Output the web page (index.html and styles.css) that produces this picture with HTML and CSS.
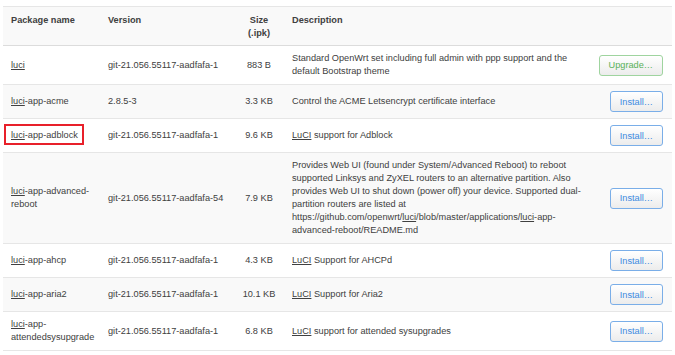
FILE: index.html
```html
<!DOCTYPE html>
<html lang="en">
<head>
  <meta charset="UTF-8" />
  <title>Software</title>
  <link rel="stylesheet" href="styles.css">
</head>
<body>
  <div class="page">
    <table class="pkg-table">
      <colgroup>
        <col class="c-name" />
        <col class="c-version" />
        <col class="c-size" />
        <col class="c-desc" />
        <col class="c-action" />
      </colgroup>
      <thead>
        <tr>
          <th>Package name</th>
          <th>Version</th>
          <th class="size">Size<br />(.ipk)</th>
          <th>Description</th>
          <th></th>
        </tr>
      </thead>
      <tbody>
        <tr>
          <td><a href="#">luci</a></td>
          <td>git-21.056.55117-aadfafa-1</td>
          <td class="size">883 B</td>
          <td>Standard OpenWrt set including full admin with ppp support and the default Bootstrap theme</td>
          <td class="action"><button class="btn btn-upgrade">Upgrade…</button></td>
        </tr>
        <tr>
          <td><a href="#">luci</a>-app-acme</td>
          <td>2.8.5-3</td>
          <td class="size">3.3 KB</td>
          <td>Control the ACME Letsencrypt certificate interface</td>
          <td class="action"><button class="btn">Install…</button></td>
        </tr>
        <tr>
          <td><span class="marked"><a href="#">luci</a>-app-adblock</span></td>
          <td>git-21.056.55117-aadfafa-1</td>
          <td class="size">9.6 KB</td>
          <td><a href="#">LuCI</a> support for Adblock</td>
          <td class="action"><button class="btn">Install…</button></td>
        </tr>
        <tr>
          <td><a href="#">luci</a>-app-advanced-reboot</td>
          <td>git-21.056.55117-aadfafa-54</td>
          <td class="size">7.9 KB</td>
          <td>Provides Web UI (found under System/Advanced Reboot) to reboot supported Linksys and ZyXEL routers to an alternative partition. Also provides Web UI to shut down (power off) your device. Supported dual-partition routers are listed at https://github.com/openwrt/<a href="#">luci</a>/blob/master/applications/<a href="#">luci</a>-app-advanced-reboot/README.md</td>
          <td class="action"><button class="btn">Install…</button></td>
        </tr>
        <tr>
          <td><a href="#">luci</a>-app-ahcp</td>
          <td>git-21.056.55117-aadfafa-1</td>
          <td class="size">4.3 KB</td>
          <td><a href="#">LuCI</a> Support for AHCPd</td>
          <td class="action"><button class="btn">Install…</button></td>
        </tr>
        <tr>
          <td><a href="#">luci</a>-app-aria2</td>
          <td>git-21.056.55117-aadfafa-1</td>
          <td class="size">10.1 KB</td>
          <td><a href="#">LuCI</a> Support for Aria2</td>
          <td class="action"><button class="btn">Install…</button></td>
        </tr>
        <tr>
          <td><a href="#">luci</a>-app-attendedsysupgrade</td>
          <td>git-21.056.55117-aadfafa-1</td>
          <td class="size">6.8 KB</td>
          <td><a href="#">LuCI</a> support for attended sysupgrades</td>
          <td class="action"><button class="btn">Install…</button></td>
        </tr>
      </tbody>
    </table>
  </div>
</body>
</html>
```

FILE: styles.css
```css
body {
  margin: 0;
  background: #fff;
  font-family: 'Liberation Sans', Arial, sans-serif;
  font-size: 9.2px;
  color: #404040;
}
.page {
  padding: 6px 3px 0 3px;
}
.pkg-table {
  width: 669px;
  table-layout: fixed;
  border-collapse: collapse;
  border-top: 1px solid #e6e6e6;
}
.c-name { width: 97px; }
.c-version { width: 134px; }
.c-size { width: 50px; }
.c-desc { width: 308px; }
.c-action { width: 80px; }
.pkg-table th,
.pkg-table td {
  padding: 6px 8px;
  line-height: 13px;
  text-align: left;
  border-bottom: 1px solid #e6e6e6;
}
.pkg-table th {
  vertical-align: top;
  font-weight: bold;
  padding-top: 7px;
  padding-bottom: 5px;
  background: #f9f9f9;
  border-bottom: 1px solid #dcdcdc;
}
.pkg-table td {
  vertical-align: middle;
}
.pkg-table tbody tr:nth-child(even) td {
  background: #f9f9f9;
}
.pkg-table .size {
  text-align: center;
  padding-left: 4px;
  padding-right: 4px;
}
.pkg-table td.action {
  text-align: right;
  white-space: nowrap;
  padding-left: 0;
  padding-right: 9px;
}
a {
  color: #404040;
  text-decoration: underline;
}
.marked {
  position: relative;
}
.marked::after {
  content: "";
  position: absolute;
  left: -7px;
  top: -6px;
  right: -6px;
  bottom: -5px;
  border: 2px solid #e8202a;
}
.btn {
  font-family: 'Liberation Sans', Arial, sans-serif;
  font-size: 9.2px;
  height: 21px;
  padding: 0 9px;
  color: #3d8ae0;
  background: linear-gradient(#ffffff, #ececec);
  border: 1px solid #7aaee8;
  border-radius: 3px;
  box-shadow: inset 0 1px 0 #fff;
  cursor: pointer;
}
.btn-upgrade {
  color: #58b158;
  border-color: #9fd49f;
}
```
